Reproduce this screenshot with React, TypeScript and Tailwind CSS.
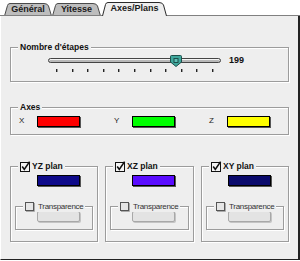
import React from "react";

const Tab: React.FC<{ label: string; active?: boolean; w: number; h: number; className: string }> = ({
  label,
  active,
  w,
  h,
  className,
}) => {
  const top = active ? 1.5 : 0.5;
  const edge = `M0.5 ${h} L3.5 ${top + 2} Q4 ${top} 6 ${top} H${w - 8} Q${w - 4.5} ${top} ${w - 3.5} ${top + 2.5} L${w - 0.5} ${h}`;
  return (
    <div className={`relative flex items-center justify-center ${className}`}>
      <svg className="absolute inset-0" width={w} height={h} viewBox={`0 0 ${w} ${h}`}>
        <path d={edge + " Z"} fill={active ? "#eeeeee" : "#bdbdbd"} stroke="none" />
        <path d={edge} fill="none" stroke={active ? "#2a2a2a" : "#4a4a4a"} strokeWidth="1" />
        {!active && <path d={`M0 ${h - 0.5} H${w}`} stroke="#808080" strokeWidth="1" />}
      </svg>
      <span className="relative text-[9px] font-bold text-[#1a1a1a] leading-none pb-[1px]">{label}</span>
    </div>
  );
};

const Group: React.FC<{ label: React.ReactNode; className: string; children?: React.ReactNode }> = ({
  label,
  className,
  children,
}) => (
  <div className={`relative border border-[#9c9c9c] shadow-[inset_1px_1px_0_#ffffff,1px_1px_0_#ffffff] ${className}`}>
    <div className="absolute left-[7px] top-[-6px] h-[11px] flex items-center bg-[#eeeeee] px-[2px]">{label}</div>
    {children}
  </div>
);

const CheckBox: React.FC<{ checked?: boolean }> = ({ checked }) =>
  checked ? (
    <svg width="11" height="11" viewBox="0 0 11 11">
      <rect x="0.5" y="1.5" width="9" height="9" fill="#f4f4f4" stroke="#111" />
      <path d="M2.2 5.6 L4.3 8.4 L9.6 0.6" fill="none" stroke="#111" strokeWidth="1.6" />
    </svg>
  ) : (
    <svg width="10" height="10" viewBox="0 0 10 10">
      <rect x="0.5" y="0.5" width="8" height="8" fill="#e6e6e6" stroke="#555" />
      <path d="M9.5 1 V9.5 H1" fill="none" stroke="#aaa" />
    </svg>
  );

const Swatch: React.FC<{ color: string }> = ({ color }) => (
  <div className={`w-[43px] h-[11px] border border-black shadow-[1px_1px_0_#555555] ${color}`} />
);

const Plan: React.FC<{ label: string; color: string; className: string }> = ({ label, color, className }) => (
  <Group
    className={`h-full ${className}`}
    label={
      <div className="flex items-center gap-[1px]">
        <CheckBox checked />
        <span className="text-[8.5px] font-bold text-[#111] leading-none">{label}</span>
      </div>
    }
  >
    <div className="mt-[8px] ml-[26px]">
      <Swatch color={color} />
    </div>
    <Group
      className="mt-[20px] mx-[4px] h-[24px]"
      label={
        <div className="flex items-center gap-[3px]">
          <CheckBox />
          <span className="text-[8px] tracking-[-0.3px] text-[#333] leading-none">Transparence</span>
        </div>
      }
    >
      <div className="mt-[4px] ml-[21px] w-[43px] h-[11px] rounded-[2px] border border-[#a8a8a8] bg-[#e3e3e3] shadow-[1px_1px_0_#c4c4c4]" />
    </Group>
  </Group>
);

export default function App() {
  const ticks = Array.from({ length: 11 }, (_, i) => i);
  return (
    <div className="w-[300px] h-[261px] flex flex-col bg-white overflow-hidden font-['Liberation_Sans',Arial,sans-serif]">
      <div className="h-[16px] flex items-end shrink-0">
        <div className="w-[4px] h-full border-b border-[#808080]" />
        <Tab label="Général" w={48} h={13} className="w-[48px] h-[13px]" />
        <Tab label="Yitesse" w={49} h={13} className="w-[49px] h-[13px]" />
        <div className="w-[1px] h-full border-b border-[#808080]" />
        <Tab label="Axes/Plans" active w={65} h={15} className="w-[65px] h-[15px]" />
        <div className="flex-1 h-full border-b border-[#808080]" />
      </div>

      <div className="flex-1 mb-px bg-[#eeeeee] border-l border-l-white border-r-2 border-r-[#222222] border-b border-b-[#222222] px-[9px] pt-[31px]">
        <Group
          className="h-[35px]"
          label={<span className="text-[8.5px] font-bold text-[#111] leading-none">Nombre d'étapes</span>}
        >
          <div className="mt-[6px] h-[13px] flex items-center pl-[37px]">
            <div className="relative w-[173px] h-[13px] flex items-center">
              <div className="w-full h-[5px] rounded-full border border-[#444] bg-[#b8b8b8] shadow-[inset_0_1px_0_#f4f4f4]" />
              <svg className="absolute left-[122px] top-[1px]" width="12" height="12" viewBox="0 0 12 12">
                <path
                  d="M1.5 0.5 H10.5 Q11.5 0.5 11.5 1.5 V7 L6 11.5 L0.5 7 V1.5 Q0.5 0.5 1.5 0.5 Z"
                  fill="#3fa79c"
                  stroke="#1d4f4b"
                />
                <rect x="4" y="3.5" width="4" height="4" fill="#5cc1b6" stroke="#1d4f4b" />
              </svg>
            </div>
            <span className="ml-[8px] text-[9px] font-bold text-[#111] leading-none">199</span>
          </div>
          <div className="mt-[2px] pl-[45px]">
            <div className="w-[157px] h-[3px] flex justify-between">
              {ticks.map((t) => (
                <div key={t} className="w-px h-[3px] bg-[#222] shadow-[1px_0_0_#999999]" />
              ))}
            </div>
          </div>
        </Group>

        <Group
          className="mt-[25px] h-[28px]"
          label={<span className="text-[8.5px] font-bold text-[#111] leading-none">Axes</span>}
        >
          <div className="h-full flex items-center pl-[8px] gap-[34px]">
            {[
              { l: "X", c: "bg-[#ff0000]" },
              { l: "Y", c: "bg-[#00ff00]" },
              { l: "Z", c: "bg-[#ffff00]" },
            ].map((a) => (
              <div key={a.l} className="flex items-center">
                <span className="w-[18px] text-[8px] text-[#222] leading-none">{a.l}</span>
                <Swatch color={a.c} />
              </div>
            ))}
          </div>
        </Group>

        <div className="mt-[31px] h-[76px] flex gap-[7px]">
          <Plan label="YZ plan" color="bg-[#0e0a8a]" className="w-[88px]" />
          <Plan label="XZ plan" color="bg-[#5a0cff]" className="w-[89px]" />
          <Plan label="XY plan" color="bg-[#0a0a6c]" className="w-[88px]" />
        </div>
      </div>
    </div>
  );
}
